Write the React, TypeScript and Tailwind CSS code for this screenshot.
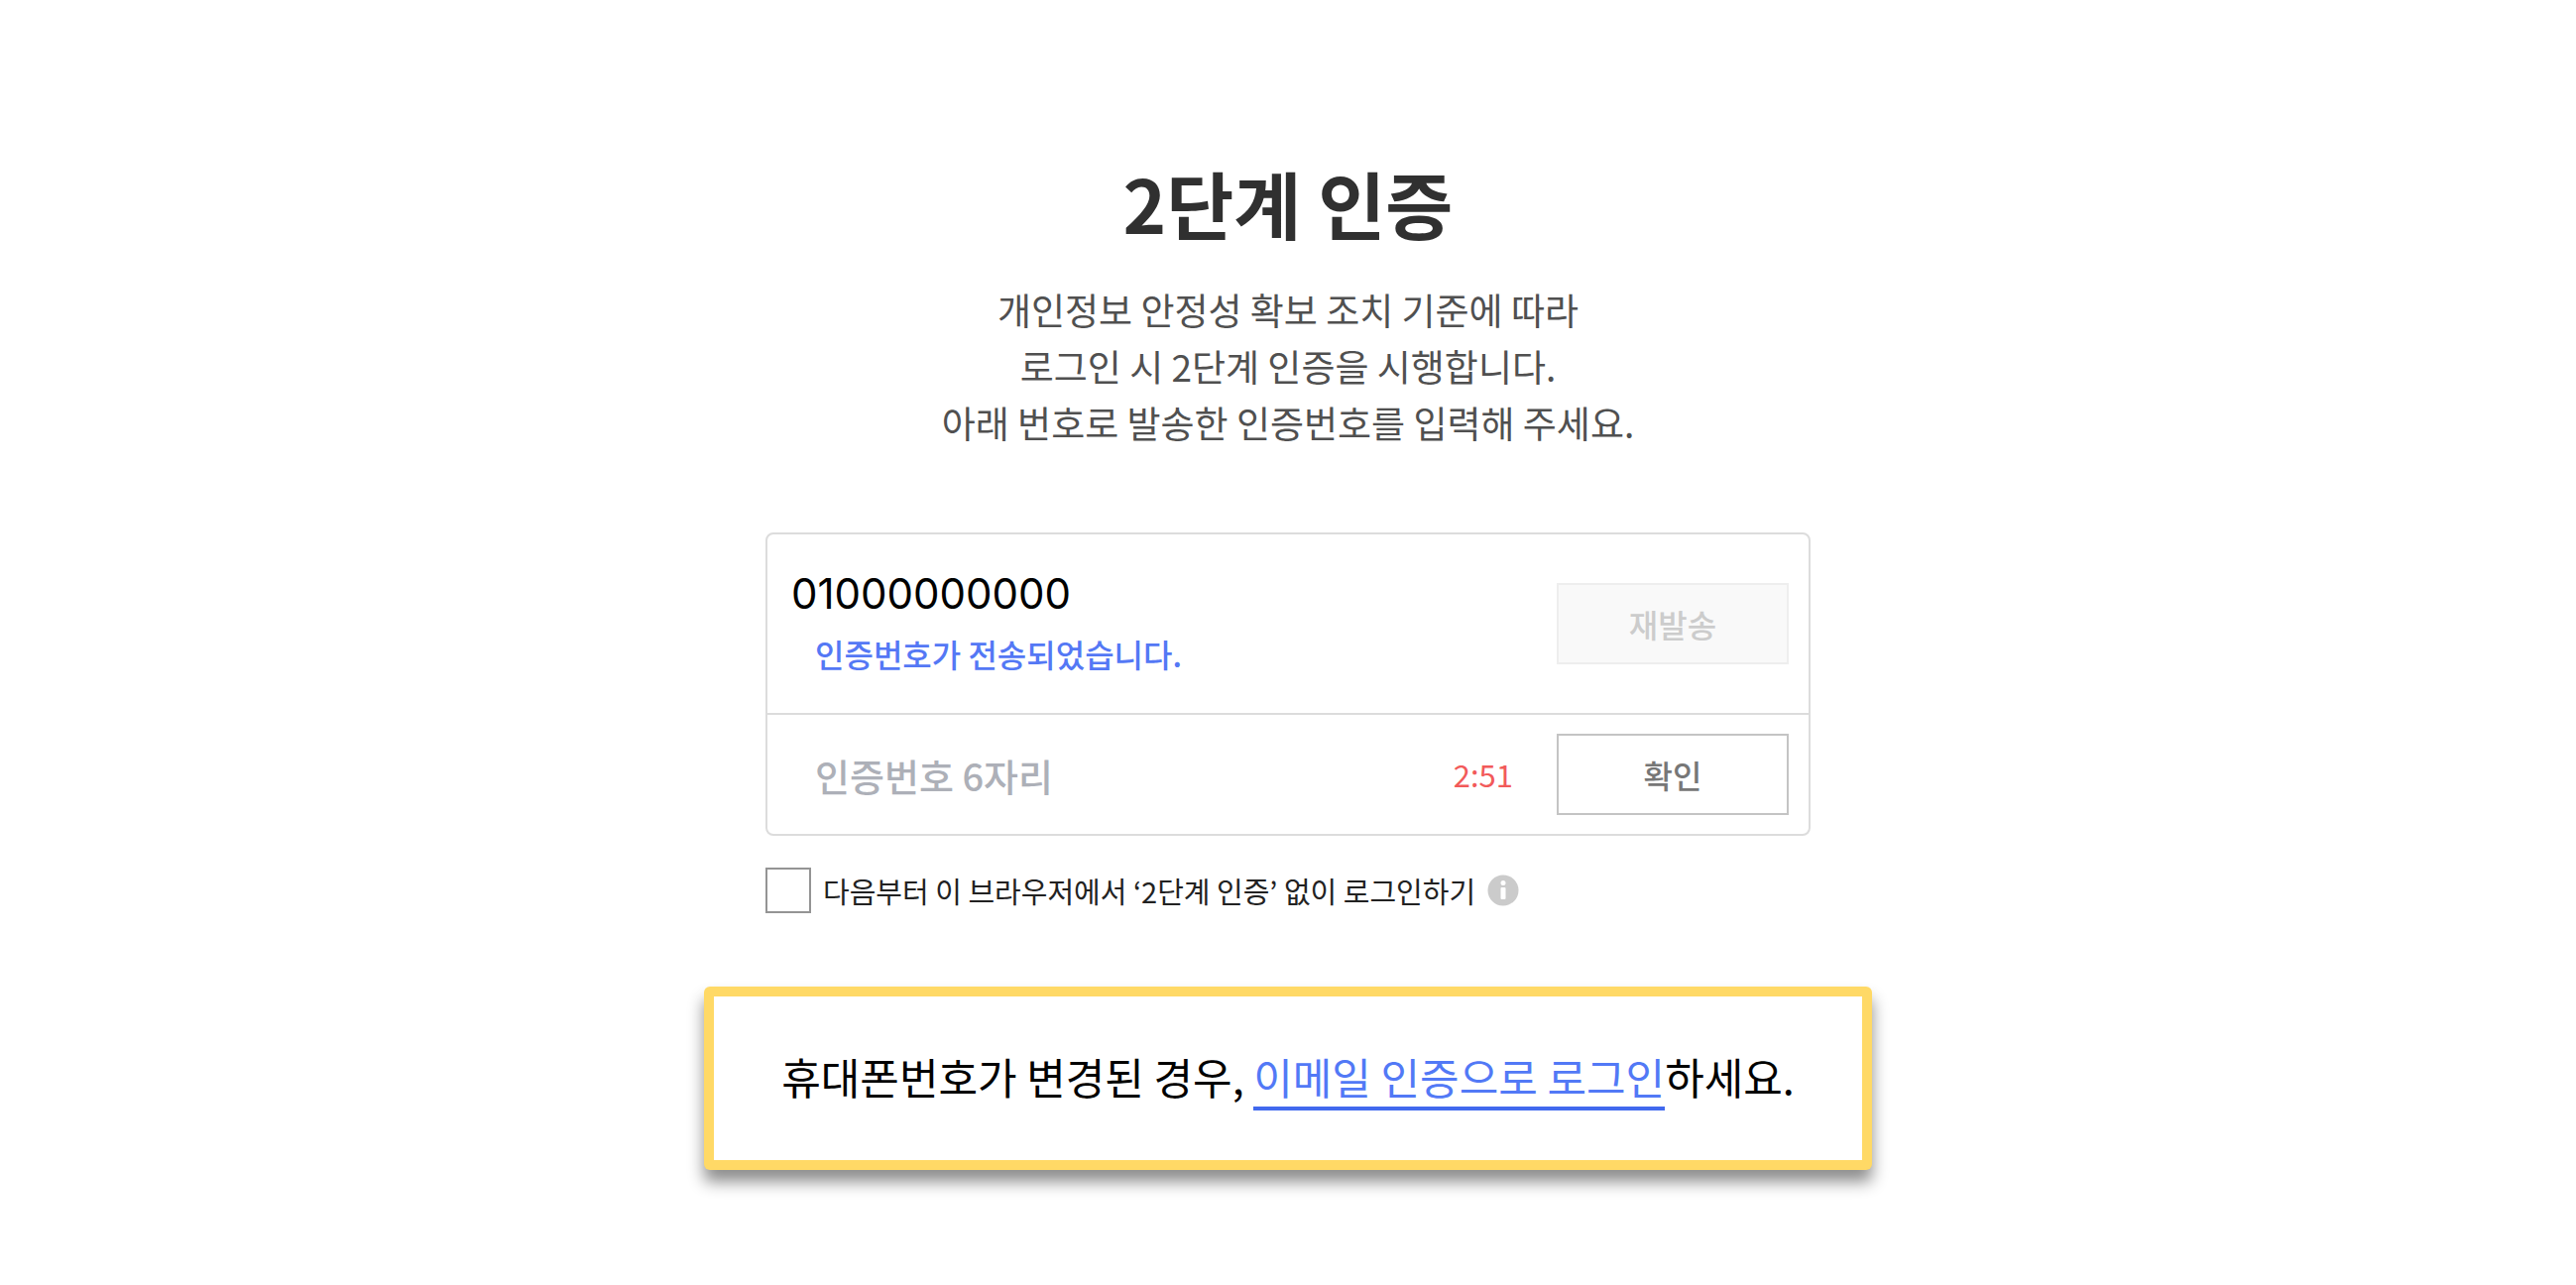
function InfoIcon() {
  return (
    <svg viewBox="0 0 32 32" className="h-8 w-8" aria-hidden="true">
      <circle cx="16" cy="16" r="15.5" fill="#cbcbcb" />
      <circle cx="16" cy="8.5" r="2.5" fill="#fff" />
      <rect x="13.5" y="13" width="5" height="12" rx="1" fill="#fff" />
    </svg>
  );
}

export default function App() {
  return (
    <main className="flex min-h-screen flex-col items-center bg-white px-4 pt-[156px] pb-16 font-['Noto_Sans_CJK_KR',sans-serif] text-black">
      <h1 className="text-center text-[74px] leading-[96px] font-bold text-[#303030]">2단계 인증</h1>

      <p className="mt-8 text-center text-[37px] leading-[57px] text-[#505050]">
        개인정보 안정성 확보 조치 기준에 따라
        <br />
        로그인 시 2단계 인증을 시행합니다.
        <br />
        아래 번호로 발송한 인증번호를 입력해 주세요.
      </p>

      <form className="mt-[82px] w-full max-w-[1054px]" onSubmit={(e) => e.preventDefault()}>
        <div className="rounded-lg border-2 border-[#dcdcdc]">
          <div className="flex h-[182px] items-center justify-between border-b-2 border-[#dcdcdc] pr-5">
            <div>
              <p className="pl-6 font-['Inter',sans-serif] text-[42px] leading-[60px]">01000000000</p>
              <p className="pl-12 text-[32px] leading-[60px] font-medium text-[#5478f5]">
                인증번호가 전송되었습니다.
              </p>
            </div>
            <button
              type="button"
              disabled
              className="h-[82px] w-[234px] border-2 border-[#eeeeee] bg-[#f9f9f9] text-[32px] font-medium text-[#cccccc]"
            >
              재발송
            </button>
          </div>
          <div className="flex h-[120px] items-center pr-5">
            <input
              type="text"
              inputMode="numeric"
              aria-label="인증번호 6자리"
              placeholder="인증번호 6자리"
              className="h-full min-w-0 flex-1 pl-12 text-[38px] font-medium outline-none placeholder:text-[#adb0b8]"
            />
            <span className="mr-11 text-[31px] text-[#f25a5a]">2:51</span>
            <button
              type="submit"
              className="h-[82px] w-[234px] border-2 border-[#c4c4c4] bg-white text-[32px] font-medium text-[#777777]"
            >
              확인
            </button>
          </div>
        </div>

        <div className="mt-8 flex items-center">
          <input
            id="remember"
            type="checkbox"
            className="h-[46px] w-[46px] shrink-0 appearance-none border-2 border-[#949494] bg-white checked:bg-[#949494]"
          />
          <label htmlFor="remember" className="ml-3 text-[29px] leading-[46px] text-[#222222]">
            다음부터 이 브라우저에서 ‘2단계 인증’ 없이 로그인하기
          </label>
          <button type="button" aria-label="안내" className="ml-3">
            <InfoIcon />
          </button>
        </div>
      </form>

      <div className="mt-[74px] w-full max-w-[1178px] rounded-md bg-[#ffd966] p-[10px] shadow-[0_12px_16px_rgba(0,0,0,0.45)]">
        <p className="bg-white pt-[50px] pb-[55px] text-center text-[43px] leading-[60px]">
          휴대폰번호가 변경된 경우,{" "}
          <a href="#email" className="border-b-4 border-[#4169ee] leading-none text-[#5279f6]">
            이메일 인증으로 로그인
          </a>
          하세요.
        </p>
      </div>
    </main>
  );
}
